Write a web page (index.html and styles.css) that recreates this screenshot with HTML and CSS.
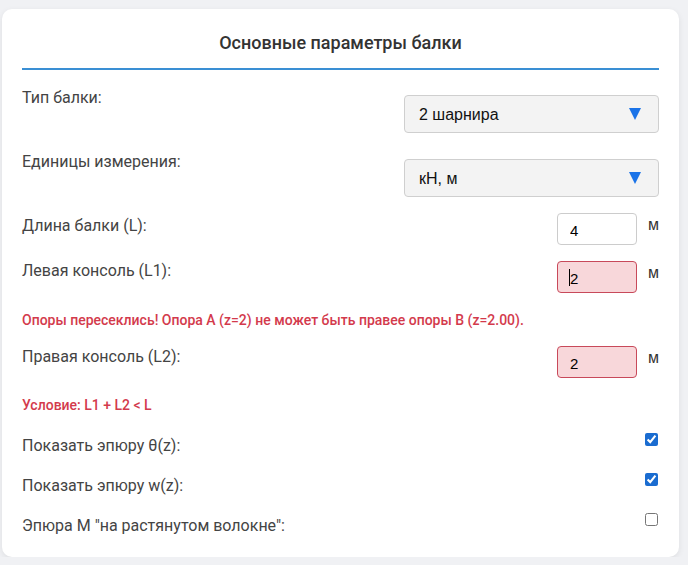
FILE: index.html
```html
<!DOCTYPE html>
<html lang="ru">
<head>
<meta charset="utf-8">
<link rel="stylesheet" href="styles.css">
</head>
<body>
<div class="card">
  <h3 class="title">Основные параметры балки</h3>
  <div class="fields">
    <div class="row row-select">
      <label class="lbl">Тип балки:</label>
      <div class="select-wrap">
        <select class="sel"><option>2 шарнира</option></select>
      </div>
    </div>
    <div class="row row-select">
      <label class="lbl">Единицы измерения:</label>
      <div class="select-wrap">
        <select class="sel"><option>кН, м</option></select>
      </div>
    </div>
    <div class="row row-input">
      <label class="lbl">Длина балки (L):</label>
      <div class="num-wrap">
        <input class="num" type="text" value="4">
        <span class="unit">м</span>
      </div>
    </div>
    <div class="row row-input">
      <label class="lbl">Левая консоль (L1):</label>
      <div class="num-wrap">
        <span class="field-box">
          <input class="num invalid" type="text" value="2">
          <span class="caret"></span>
        </span>
        <span class="unit">м</span>
      </div>
    </div>
    <div class="error err-long">Опоры пересеклись! Опора A (z=2) не может быть правее опоры B (z=2.00).</div>
    <div class="row row-input">
      <label class="lbl">Правая консоль (L2):</label>
      <div class="num-wrap">
        <input class="num invalid" type="text" value="2">
        <span class="unit">м</span>
      </div>
    </div>
    <div class="error err-short">Условие: L1 + L2 &lt; L</div>
    <div class="row row-check">
      <label class="lbl">Показать эпюру θ(z):</label>
      <input class="chk" type="checkbox" checked>
    </div>
    <div class="row row-check">
      <label class="lbl">Показать эпюру w(z):</label>
      <input class="chk" type="checkbox" checked>
    </div>
    <div class="row row-check">
      <label class="lbl">Эпюра М "на растянутом волокне":</label>
      <input class="chk" type="checkbox">
    </div>
  </div>
</div>
</body>
</html>
```
FILE: styles.css
```css
html, body {
  margin: 0;
  padding: 0;
}
body {
  background: #f0f1f4;
  font-family: Roboto, "Liberation Sans", sans-serif;
}
.card {
  box-sizing: border-box;
  margin: 9px 9px 0 2px;
  width: 677px;
  height: 548px;
  background: #fff;
  border-radius: 10px;
  box-shadow: 0 2px 6px rgba(0, 0, 0, 0.08);
  padding: 0 20px;
}
.title {
  margin: 0;
  padding: 24px 0 15px;
  font-size: 18px;
  line-height: 20px;
  font-weight: 500;
  color: #333;
  text-align: center;
  border-bottom: 2px solid #3a8fd4;
}
.fields {
  display: flex;
  flex-direction: column;
  padding-top: 19px;
}
.row {
  display: flex;
  justify-content: space-between;
  align-items: flex-start;
}
.lbl {
  font-size: 16px;
  line-height: 18px;
  color: #444;
}
.row-select {
  margin-bottom: 20px;
}
.row-select + .row-input {
  margin-top: -4px;
}
.row-select .select-wrap {
  margin-top: 6px;
}
.select-wrap {
  position: relative;
  width: 255px;
}
.sel {
  -webkit-appearance: none;
  appearance: none;
  box-sizing: border-box;
  width: 255px;
  height: 38px;
  padding: 0 14px;
  border: 1px solid #cfcfcf;
  border-radius: 4px;
  background: #f3f3f3;
  font-family: "Liberation Sans", Arial, sans-serif;
  font-size: 16px;
  color: #111;
}
.select-wrap::after {
  content: "";
  position: absolute;
  right: 18px;
  top: 13px;
  width: 0;
  height: 0;
  border-left: 6px solid transparent;
  border-right: 6px solid transparent;
  border-top: 12px solid #1a73e8;
  pointer-events: none;
}
.row-input {
  margin-bottom: 16px;
}
.row-input .lbl {
  margin-top: 4px;
}
.row-input:nth-child(4) .lbl {
  margin-top: 1px;
}
.row-input:nth-child(6) .lbl {
  margin-top: 2px;
}
.num-wrap {
  display: flex;
  align-items: flex-start;
  gap: 11px;
}
.field-box {
  position: relative;
  display: block;
}
.num {
  display: block;
  box-sizing: border-box;
  width: 80px;
  height: 32px;
  padding: 2px 0 0 12px;
  border: 1px solid #cccccc;
  border-radius: 4px;
  background: #fff;
  font-family: "Liberation Sans", Arial, sans-serif;
  font-size: 15px;
  color: #000;
  outline: none;
}
.num.invalid {
  background: #f8d7da;
  border-color: #c8495a;
}
.caret {
  position: absolute;
  left: 12px;
  top: 8px;
  width: 1px;
  height: 17px;
  background: #000;
}
.unit {
  font-family: "Liberation Sans", Arial, sans-serif;
  font-size: 16px;
  line-height: 18px;
  color: #333;
  padding-top: 3px;
  width: 11px;
}
.error {
  font-size: 14px;
  line-height: 16px;
  font-weight: 500;
  color: #d33a4c;
}
.row-input + .error {
  margin-top: 3px;
}
.err-long {
  margin-bottom: 18px;
}
.err-short {
  margin-top: 2px;
  margin-bottom: 20px;
}
.row-check {
  margin-bottom: 18px;
}
.row-check .lbl {
  margin-top: 4px;
}
.chk {
  margin: 0 1px 0 0;
  width: 13px;
  height: 13px;
  accent-color: #1a6cd0;
}
```
